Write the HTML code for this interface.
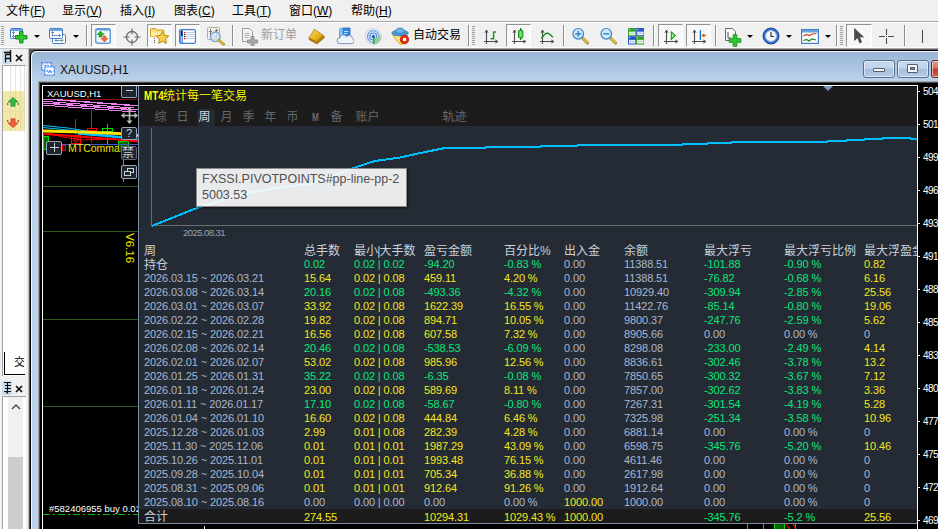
<!DOCTYPE html>
<html lang="zh"><head><meta charset="utf-8"><title>MT4</title>
<style>
*{box-sizing:border-box;margin:0;padding:0}
html,body{width:938px;height:529px;overflow:hidden;background:#f0f0f0;font-family:"Liberation Sans","Noto Sans CJK SC",sans-serif;font-size:12px;color:#000}
.abs,.abs>*{position:absolute}
#menu{left:0;top:0;width:938px;height:21px;background:#f0f0f0}
#menu span{position:absolute;top:3px;font-size:12px;line-height:17px;white-space:nowrap;color:#000}
#menu u{text-decoration:underline;text-underline-offset:1px}
#mline1{left:0;top:21px;width:938px;height:1px;background:#a6a6a6}
#mline2{left:0;top:22px;width:938px;height:1px;background:#fff}
#tb{left:0;top:23px;width:938px;height:26px;background:#f0f0f0;border-bottom:1px solid #c4c4c4;box-shadow:inset 0 -1px 0 #fff}
.sep{position:absolute;top:2px;width:1px;height:21px;background:#8c8c8c;box-shadow:1px 0 0 #fff}
.grip{position:absolute;top:3px;width:3px;height:20px;background:repeating-linear-gradient(#a0a0a0 0 1px,transparent 1px 2px)}
.pbtn{position:absolute;top:1px;height:23px;border:1px solid #939393;border-right-color:#fff;border-bottom-color:#fff;background:repeating-conic-gradient(#fff 0 25%,#f0f0f0 0 50%) 0 0/2px 2px}
.dd{position:absolute;top:12px;width:0;height:0;border-left:3px solid transparent;border-right:3px solid transparent;border-top:3px solid #000}
.tbt{position:absolute;top:5px;font-size:12px;line-height:14px;white-space:nowrap}
#tb svg{position:absolute}
#left>*{position:absolute}
#left{left:0;top:49px;width:28px;height:480px;background:#f0f0f0}
#mdi{left:28px;top:48px;width:910px;height:481px;background:#595959;border-left:1px solid #b9b9b9;border-top:1px solid #a8a8a8}
#win{left:30px;top:50px;width:920px;height:490px;border:1px solid #000;border-radius:6px 0 0 0;background:linear-gradient(#98b3d5 0,#a9c2df 14px,#bbd2ea 30px,#b9d1ea 100%);box-shadow:inset 1px 1px 0 rgba(255,255,255,.85)}
#wtitle{left:60px;top:63px;font-size:12px;line-height:14px;color:#111;white-space:nowrap}
.wb{position:absolute;top:60px;height:18px;border:1px solid #5a6f8f;border-radius:3px;background:linear-gradient(#c5d9ee 0,#c0d5ec 45%,#a5bedc 50%,#b4cbe6 100%);box-shadow:inset 0 0 0 1px rgba(255,255,255,.55)}
#chart{left:38px;top:81px;width:900px;height:448px;background:#000;border-left:1px solid #9da1a6;border-top:1px solid #a5a8ac;box-shadow:inset 1px 1px 0 #4c4c4c}
#cframe{left:42px;top:85px;width:876px;height:444px;border-left:1px solid #fff;border-top:1px solid #fff;border-right:1px solid #fff}
.ax{position:absolute;left:923px;font-size:10px;letter-spacing:-.5px;line-height:12px;color:#fff;white-space:nowrap;font-family:"Liberation Sans",sans-serif}
.tick{position:absolute;left:918px;width:2px;height:1px;background:#fff}
#panel{left:138px;top:86px;width:779px;height:438px;background:#252b34;border-left:1px solid #7d8fa8;border-bottom:1px solid #7d8a9c;overflow:hidden}
#phead{left:0;top:0;width:779px;height:40px;background:#1c1c1c}
#ptitle{left:5px;top:2.5px;font-size:12px;line-height:14px;color:#ffff00;white-space:nowrap;font-weight:350}
.tab{position:absolute;top:23px;font-size:12px;line-height:16px;color:#676a6e;white-space:nowrap}
#tabsel{left:58px;top:23px;width:18px;height:18px;background:#252b34;border-radius:3px}
#psum{left:0;top:423px;width:779px;height:14px;background:#1c1c1c}
.c{position:absolute;white-space:nowrap;line-height:14px}
.h{font-size:12px;color:#c9d1db;font-family:"Liberation Sans","Noto Sans CJK SC",sans-serif}
.d{font-size:11px;color:#a9b7cf;letter-spacing:-0.12px}
.v{font-size:11px;letter-spacing:-0.12px}
.y{color:#f3e71e}.g{color:#0ae779}.n{color:#a9b7cf}
.mb{position:absolute;width:16px;border:1px solid #98a8be;background:#1f242c;border-radius:2px;color:#c9d1db;text-align:center}
#tip{left:196px;top:168px;width:211px;height:39px;background:rgba(255,255,255,.9);border:1px solid #8c8c8c;box-shadow:1px 1px 2px rgba(0,0,0,.6);font-size:12.5px;color:#505050}
#tip div{position:absolute;left:5px;white-space:nowrap;line-height:15px}
</style></head><body>
<div class="abs">
<!-- MENU -->
<div id="menu">
<span style="left:6px">文件(<u>F</u>)</span>
<span style="left:62px">显示(<u>V</u>)</span>
<span style="left:120px">插入(<u>I</u>)</span>
<span style="left:174px">图表(<u>C</u>)</span>
<span style="left:232px">工具(<u>T</u>)</span>
<span style="left:289px">窗口(<u>W</u>)</span>
<span style="left:351px">帮助(<u>H</u>)</span>
</div>
<div id="mline1"></div><div id="mline2"></div>
<!-- TOOLBAR -->
<div id="tb">
<div class="grip" style="left:1px"></div>
<svg style="left:10px;top:5px" width="18" height="17" viewBox="0 0 18 17">
<rect x="0.5" y="0.5" width="12" height="10" rx="1" fill="#fdfdfd" stroke="#3d7fc9"/>
<rect x="1" y="1" width="11" height="2" fill="#6aa3e0"/>
<path d="M3.5 3.5v6M2 5l1.500-1.500L5 5M2 8l1.500 1.500L5 8" stroke="#6f8fb5" fill="none"/>
<path d="M9.500 3.500h3.500v4h4v3.500h-4v4h-3.500v-4h-4v-3.500h4z" fill="#2fc62f" stroke="#12921a" stroke-width="1"/>
</svg>
<div class="dd" style="left:34px"></div>
<svg style="left:49px;top:5px" width="18" height="17" viewBox="0 0 18 17">
<rect x="3.500" y="6.500" width="13" height="9" rx="1" fill="#fdfdfd" stroke="#3d7fc9"/>
<path d="M6 12.500h8M6 12.500l1.500-1.500M6 12.500l1.500 1.500M14 12.500l-1.500-1.500M14 12.500l-1.500 1.500" stroke="#6f8fb5" fill="none"/>
<rect x="0.500" y="0.500" width="13" height="10" rx="1" fill="#fdfdfd" stroke="#3d7fc9"/>
<rect x="1" y="1" width="12" height="2" fill="#6aa3e0"/>
<path d="M3.500 3.500v5M3.500 7.500h8M2 5l1.500-1.500L5 5M10 6l1.500 1.500L10 9" stroke="#6f8fb5" fill="none"/>
</svg>
<div class="dd" style="left:73px"></div>
<div class="sep" style="left:86px"></div>
<div class="pbtn" style="left:91px;width:25px"></div>
<svg style="left:95px;top:5px" width="16" height="16" viewBox="0 0 16 16">
<rect x="0.750" y="0.750" width="14.500" height="14.500" rx="2" fill="#fff" stroke="#5b9bd8" stroke-width="1.500"/>
<rect x="1" y="1" width="14" height="1.500" fill="#5b9bd8"/>
<path d="M9 3.500h4.500M9 5.500h4.500M2.500 11.500h4M2.500 13.500h4M2.500 9.500h3" stroke="#d5dbe3" stroke-dasharray="1.500 .8"/>
<path d="M5.500 3l3.500 3.500h-2v2.500h-3v-2.500h-2z" fill="#22b022" stroke="#148a14" stroke-width=".6"/>
<path d="M9.500 14l-3.500-3.500h2v-2.500h3v2.500h2z" fill="#f06a3a" stroke="#d04a18" stroke-width=".6"/>
</svg>
<svg style="left:122px;top:4px" width="20" height="20" viewBox="0 0 20 20">
<circle cx="10" cy="10" r="5.500" fill="none" stroke="#6a6a6a" stroke-width="1.300"/>
<path d="M10 1.500v6M10 12.500v6M1.500 10h6M12.500 10h6" stroke="#6a6a6a" stroke-width="1.100"/>
</svg>
<div class="pbtn" style="left:147px;width:25px"></div>
<svg style="left:150px;top:4px" width="20" height="18" viewBox="0 0 20 18">
<path d="M0.500 2.500q0-1 1-1h4l1.500 1.500h6q1 0 1 1v5.500h-13.500z" fill="#f7dc7a" stroke="#c9a227"/>
<path d="M1 5h13v4.500h-13z" fill="#fbeaa0"/>
<path d="M4.500 11v5" stroke="#555" stroke-dasharray="1 1"/>
<path d="M12.500 4.500l1.900 3.900 4.300.600-3.100 3 .7 4.300-3.800-2-3.800 2 .7-4.300-3.100-3 4.300-.600z" fill="#f6cf4a" stroke="#b8860b" stroke-width="1"/>
</svg>
<div class="pbtn" style="left:175px;width:25px"></div>
<svg style="left:179px;top:6px" width="17" height="15" viewBox="0 0 17 15">
<rect x="0.600" y="0.600" width="15.800" height="13.800" rx="1.500" fill="#fff" stroke="#3d7fd0" stroke-width="1.200"/>
<rect x="1.200" y="1.200" width="2.800" height="12.600" fill="#4a86d8"/>
<rect x="2" y="2" width="1.400" height="5" fill="#1a1a1a"/><rect x="2" y="7" width="1.400" height="6" fill="#9cc0f0"/>
<path d="M6.500 3.500h8.500M6.500 5.500h8.500M6.500 7.500h8.500M6.500 9.500h8.500" stroke="#a8c0ec" stroke-width=".8"/>
<rect x="5" y="2.900" width="1.300" height="1.300" fill="#e01818"/><rect x="5" y="4.900" width="1.300" height="1.300" fill="#333"/><rect x="5" y="6.900" width="1.300" height="1.300" fill="#333"/><rect x="5" y="8.900" width="1.300" height="1.300" fill="#e01818"/>
</svg>
<svg style="left:207px;top:4px" width="20" height="19" viewBox="0 0 20 19">
<rect x="0.500" y="0.500" width="12" height="12" rx="1" fill="#f1efe6" stroke="#b5ad98"/>
<path d="M3.500 2v8M9.500 2v8M2 4.500h3M8 3.500h3" stroke="#777"/>
<circle cx="8.300" cy="9.800" r="4.800" fill="#cfe3f7" fill-opacity=".85" stroke="#7aa4d4" stroke-width="1.300"/>
<path d="M12 13.300l4.500 4" stroke="#a8841c" stroke-width="2.800" stroke-linecap="round"/><path d="M12 13.200l4.300 3.800" stroke="#e6c544" stroke-width="1.400" stroke-linecap="round"/>
</svg>
<div class="sep" style="left:232px"></div>
<svg style="left:241px;top:5px" width="18" height="18" viewBox="0 0 18 18">
<path d="M1.500 0.500h7l3 3v10h-10z" fill="#f4f4f4" stroke="#9a9a9a"/>
<path d="M3.500 5.500h5M3.500 7.500h5M3.500 9.500h4" stroke="#aaa"/>
<path d="M10 8.500h3v3.500h3.500v3h-3.500v3.500h-3v-3.500h-3.500v-3h3.500z" fill="#a8a8a8" stroke="#8a8a8a" stroke-width=".8"/>
</svg>
<span class="tbt" style="left:261px;color:#9d9d9d">新订单</span>
<svg style="left:307px;top:6px" width="19" height="16" viewBox="0 0 19 16">
<defs><linearGradient id="gd" x1="0" y1="0" x2="1" y2="1"><stop offset="0" stop-color="#fbe27a"/><stop offset=".5" stop-color="#eab81e"/><stop offset="1" stop-color="#c48c0c"/></linearGradient></defs>
<path d="M2.100 8.800L9.300 12.700 16.500 6.400 17.500 8.600 10 15 2 10.600z" fill="#b47a0a" stroke="#8a5a06" stroke-width=".6"/>
<path d="M7.400 0.300L16.500 6.400 9.300 12.700 2.100 8.800z" fill="url(#gd)" stroke="#a87408" stroke-width=".7"/>
</svg>
<svg style="left:336px;top:4px" width="18" height="18" viewBox="0 0 18 18">
<path d="M3.500 2.200L6.500 1h7.500v10h-10.500z" fill="#2f86e6" stroke="#1c66c0" stroke-width=".7"/>
<path d="M3.500 2.200L6.500 1v10h-3z" fill="#8cc4f6"/>
<path d="M8 4.500h4.500M8 6.500h3" stroke="#bfe0fb" stroke-width="1"/>
<path d="M4 16.600a2.800 2.800 0 0 1-.3-5.600 3.600 3.600 0 0 1 6.800-1.200 3.300 3.300 0 0 1 6 1.800 2.600 2.600 0 0 1-.8 5z" fill="#eef4fb" stroke="#6f88b2" stroke-width=".9"/>
</svg>
<svg style="left:364px;top:5px" width="18" height="18" viewBox="0 0 18 18">
<circle cx="9.300" cy="8.500" r="8" fill="#eef2f6" stroke="#c3d3ea" stroke-width="1"/>
<circle cx="9.300" cy="8.500" r="5.800" fill="none" stroke="#6f9fe0" stroke-width="1.300"/>
<circle cx="9.300" cy="8.500" r="3.500" fill="none" stroke="#4a80d8" stroke-width="1.200"/>
<path d="M9.300 8.500L9.300 16.500A8 8 0 0 0 17.300 8.500z" fill="#8fd08f" fill-opacity=".75"/>
<path d="M9.800 9v7" stroke="#2fae2f" stroke-width="1.600"/>
<circle cx="9.300" cy="8.500" r="1.700" fill="#2a5fc8"/>
</svg>
<svg style="left:391px;top:4px" width="19" height="19" viewBox="0 0 19 19">
<path d="M1.500 8l7.500 9.300 3.500-.3 4-9z" fill="#f7d84a" stroke="#c9a21a" stroke-width=".8"/>
<path d="M3 8.500l6 7.500 1-7.500z" fill="#fbe98a"/>
<ellipse cx="9" cy="6" rx="8.200" ry="2.900" fill="#4a9bd6" stroke="#2d79b8" stroke-width=".8"/>
<path d="M4.500 5.500q.5-4.500 4.500-4.500t4.500 4.500q-4.500 2-9 0z" fill="#6db6e8" stroke="#2d79b8" stroke-width=".8"/>
<circle cx="13.500" cy="12.500" r="4.200" fill="#e42a12" stroke="#b81c08" stroke-width=".8"/>
<rect x="11.900" y="10.900" width="3.200" height="3.200" fill="#fff"/>
</svg>
<span class="tbt" style="left:413px;color:#000">自动交易</span>
<div class="sep" style="left:468px"></div>
<div class="grip" style="left:472px"></div>
<svg style="left:484px;top:6px" width="16" height="16" viewBox="0 0 16 16">
<path d="M2.500 1.500v13.500M0 12.500h13.500" stroke="#4e4e4e" fill="none" stroke-width="1.100"/><path d="M1 3.800L2.500 1 4 3.800M11.200 11L14 12.500 11.200 14" stroke="#4e4e4e" fill="none" stroke-width="1"/>
<path d="M9.600 2.600v7.700M9.600 3h2.200M9.600 9.800h-3" stroke="#1a8a1a" fill="none" stroke-width="1.400"/>
</svg>
<div class="pbtn" style="left:506px;width:25px"></div>
<svg style="left:512px;top:6px;overflow:visible" width="16" height="16" viewBox="0 0 16 16">
<path d="M2.500 1.500v13.500M0 12.500h13.500" stroke="#4e4e4e" fill="none" stroke-width="1.100"/><path d="M1 3.800L2.500 1 4 3.800M11.200 11L14 12.500 11.200 14" stroke="#4e4e4e" fill="none" stroke-width="1"/>
<path d="M8.700 -1v12" stroke="#157a15" stroke-width="1.300"/>
<rect x="6.500" y="1.300" width="4.400" height="7.500" rx=".8" fill="#3fd63f" stroke="#158015" stroke-width=".9"/>
<rect x="7.700" y="2.300" width="1.800" height="5.500" fill="#8af08a" fill-opacity=".7"/>
</svg>
<svg style="left:540px;top:6px" width="16" height="16" viewBox="0 0 16 16">
<path d="M2.500 1.500v13.500M0 12.500h13.500" stroke="#4e4e4e" fill="none" stroke-width="1.100"/><path d="M1 3.800L2.500 1 4 3.800M11.200 11L14 12.500 11.200 14" stroke="#4e4e4e" fill="none" stroke-width="1"/>
<path d="M1.400 9.500Q5 4.200 7.300 4.300T12.900 8.400" stroke="#1a8a1a" fill="none" stroke-width="1.400"/>
</svg>
<div class="sep" style="left:563px"></div>
<svg style="left:572px;top:4px" width="18" height="18" viewBox="0 0 18 18">
<path d="M10.500 11l5 5" stroke="#a8841c" stroke-width="3" stroke-linecap="round"/>
<path d="M10.500 10.800l4.800 4.800" stroke="#e6c544" stroke-width="1.600" stroke-linecap="round"/>
<circle cx="6.300" cy="6.800" r="5.300" fill="#cfe8fa" stroke="#3a80c8" stroke-width="1.200"/>
<path d="M3.300 6.800h6M6.300 3.800v6" stroke="#4a90cc" stroke-width="1.700"/>
</svg>
<svg style="left:600px;top:4px" width="18" height="18" viewBox="0 0 18 18">
<path d="M10.500 11l5 5" stroke="#a8841c" stroke-width="3" stroke-linecap="round"/>
<path d="M10.500 10.800l4.800 4.800" stroke="#e6c544" stroke-width="1.600" stroke-linecap="round"/>
<circle cx="6.300" cy="6.800" r="5.300" fill="#cfe8fa" stroke="#3a80c8" stroke-width="1.200"/>
<path d="M3.300 6.800h6" stroke="#4a90cc" stroke-width="1.700"/>
</svg>
<svg style="left:627.500px;top:5px" width="16.500" height="16.500" viewBox="0 0 16 16">
<rect x="0" y="0" width="8" height="8" fill="#36a02a"/><rect x="8" y="0" width="8" height="8" fill="#2458c8"/>
<rect x="0" y="8" width="8" height="8" fill="#2458c8"/><rect x="8" y="8" width="8" height="8" fill="#36a02a"/>
<rect x="1" y="3.500" width="6" height="3.500" fill="#eef8ee"/><rect x="9" y="3.500" width="6" height="3.500" fill="#eef2fc"/>
<rect x="1" y="11.500" width="6" height="3.500" fill="#eef2fc"/><rect x="9" y="11.500" width="6" height="3.500" fill="#eef8ee"/>
<path d="M2 5h4M10 13h4" stroke="#8fd08f" stroke-width=".8"/><path d="M10 5h4M2 13h4" stroke="#8fb0f0" stroke-width=".8"/>
<rect x="1" y="1" width="1" height="1" fill="#cfeccf"/><rect x="9" y="1" width="1" height="1" fill="#cfdcf8"/><rect x="1" y="9" width="1" height="1" fill="#cfdcf8"/><rect x="9" y="9" width="1" height="1" fill="#cfeccf"/>
</svg>
<div class="sep" style="left:653px"></div>
<div class="pbtn" style="left:658px;width:25px"></div>
<svg style="left:664px;top:6px" width="16" height="16" viewBox="0 0 16 16">
<path d="M2.500 1.500v13.500M0 12.500h13.500" stroke="#4e4e4e" fill="none" stroke-width="1.100"/><path d="M1 3.800L2.500 1 4 3.800M11.200 11L14 12.500 11.200 14" stroke="#4e4e4e" fill="none" stroke-width="1"/>
<path d="M7.300 3l4 3.500-4 4z" fill="#b8f0b8" stroke="#1a9a1a" stroke-width="1.100"/>
</svg>
<div class="pbtn" style="left:686px;width:25px"></div>
<svg style="left:692px;top:6px" width="16" height="16" viewBox="0 0 16 16">
<path d="M2.500 1.500v13.500M0 12.500h13.500" stroke="#4e4e4e" fill="none" stroke-width="1.100"/><path d="M1 3.800L2.500 1 4 3.800M11.200 11L14 12.500 11.200 14" stroke="#4e4e4e" fill="none" stroke-width="1"/>
<path d="M8.400 1.200v9.600" stroke="#1a6ab0" stroke-width="1.300"/>
<path d="M14 6.500h-4" stroke="#e05a10" stroke-width="1.200"/><path d="M9.500 6.500l2.800-2.300v4.600z" fill="#e05a10"/>
</svg>
<div class="sep" style="left:715px"></div>
<svg style="left:725px;top:5px;overflow:visible" width="18" height="18" viewBox="0 0 18 18">
<path d="M0.500 0.500h7l3 3v9h-10z" fill="#f6f6f6" stroke="#6a6a6a"/>
<path d="M3 4v6h3" stroke="#555" fill="none"/>
<path d="M8.200 6.700h3.600v4h4v3.600h-4v4h-3.600v-4h-4v-3.600h4z" fill="#2fc62f" stroke="#12921a" stroke-width=".9"/>
</svg>
<div class="dd" style="left:747px"></div>
<svg style="left:762px;top:4px" width="18" height="18" viewBox="0 0 18 18">
<circle cx="9" cy="9" r="8" fill="#2f6fc8" stroke="#1a4a94"/>
<circle cx="9" cy="9" r="5.500" fill="#f4f8fc" stroke="#9ab8e0"/>
<path d="M9 5v4.500h3" stroke="#333" fill="none" stroke-width="1.200"/>
</svg>
<div class="dd" style="left:786px"></div>
<svg style="left:801px;top:6px" width="18" height="15" viewBox="0 0 18 15">
<rect x="0.600" y="0.600" width="16.800" height="13.800" fill="#fdfdfd" stroke="#3d7fc9" stroke-width="1.200"/>
<rect x="1" y="1" width="16" height="2.500" fill="#6aa3e0"/>
<path d="M2.500 7l3-1.500 3 1 3-1.500 4-0.500" stroke="#d23a1a" fill="none" stroke-width="1.200"/>
<path d="M2.500 11.500l3-1 2.500 1.500 3-2 4 1" stroke="#1a8a1a" fill="none" stroke-width="1.200"/>
</svg>
<div class="dd" style="left:825px"></div>
<div class="sep" style="left:836px"></div>
<div class="grip" style="left:840px"></div>
<div class="pbtn" style="left:846px;width:26px"></div>
<svg style="left:854px;top:5px" width="11" height="16" viewBox="0 0 11 16">
<path d="M0.500 0.500v12l3-2.800 2.200 5.300 2-.9-2.200-5.100h4z" fill="#4a4a4a" stroke="#3c3c3c" stroke-width=".6"/>
</svg>
<svg style="left:879px;top:6px" width="15" height="15" viewBox="0 0 15 15">
<path d="M7.500 0v6M7.500 9v6M0 7.500h6M9 7.500h6" stroke="#4a4a4a" stroke-width="1.100"/><rect x="7" y="7" width="1" height="1" fill="#4a4a4a"/>
</svg>
<div class="sep" style="left:904px"></div>
<div style="position:absolute;left:922px;top:7px;width:1px;height:13px;background:#444"></div>
</div>
<!-- LEFT PANEL -->
<div id="left">
<div style="left:2px;top:1px;width:10px;height:14px;background:#cfdcec"></div>
<svg style="left:3px;top:1px" width="9" height="13" viewBox="0 0 9 13"><path d="M1 2.500h6.500M7.500 0v12M2.500 4.500h5M2.500 4.500v8M2.500 8.500h5" stroke="#111" fill="none" stroke-width="1.300"/></svg>
<svg style="left:15px;top:5px" width="8" height="8" viewBox="0 0 8 8"><path d="M1 1l6 6M7 1l-6 6" stroke="#111" stroke-width="1.700"/></svg>
<div style="left:2px;top:16px;width:24px;height:311px;background:#fff;border-top:1px solid #a0a0a0;border-left:1px solid #a0a0a0"></div>
<div style="left:24px;top:17px;width:1px;height:310px;background:#f4f4f4"></div>
<div style="left:3px;top:42px;width:22px;height:40px;background:#f3e7a2"></div>
<div style="left:10px;top:17px;width:1px;height:65px;background:rgba(200,200,200,.45)"></div>
<div style="left:15px;top:17px;width:1px;height:65px;background:rgba(200,200,200,.45)"></div>
<div style="left:20px;top:17px;width:1px;height:65px;background:rgba(200,200,200,.45)"></div>
<div style="left:24px;top:17px;width:1px;height:65px;background:rgba(200,200,200,.45)"></div>
<div style="left:3px;top:62px;width:22px;height:1px;background:#e6dcae"></div>
<svg style="left:7px;top:48px" width="12" height="10" viewBox="0 0 12 12" preserveAspectRatio="none"><path d="M6 0.500l5 5.500h-3v5h-4v-5h-3z" fill="#35b84a" stroke="#1d8a2e" stroke-width=".8"/><path d="M0 7l2 1.500-2 1.500zM12 7l-2 1.500 2 1.500z" fill="#1d8a2e"/></svg>
<svg style="left:7px;top:69px" width="12" height="10" viewBox="0 0 12 12" preserveAspectRatio="none"><path d="M6 11.500l5-5.500h-3v-5h-4v5h-3z" fill="#f0643a" stroke="#c23c14" stroke-width=".8"/><path d="M0 2l2 1.500-2 1.500zM12 2l-2 1.500 2 1.500z" fill="#c23c14"/></svg>
<div style="left:4px;top:303px;width:21px;height:23px;border-left:1px solid #000;border-bottom:1px solid #000"></div>
<div style="left:14px;top:307px;font-size:11px;line-height:13px;color:#000;overflow:hidden;width:10px;white-space:nowrap">交</div>
<div style="left:0;top:327px;width:29px;height:4px;background:#f0f0f0"></div>
<div style="left:2px;top:332px;width:10px;height:14px;background:#cfdcec"></div>
<svg style="left:3px;top:332px" width="9" height="13" viewBox="0 0 9 13"><path d="M1 1.500h7M2 4.500h6M2 7.500h6M1 10.500h7M4.500 1.500v9M5 12.500l-2-2" stroke="#111" fill="none" stroke-width="1.200"/></svg>
<svg style="left:15px;top:336px" width="8" height="8" viewBox="0 0 8 8"><path d="M1 1l6 6M7 1l-6 6" stroke="#111" stroke-width="1.700"/></svg>
<div style="left:2px;top:347px;width:24px;height:133px;background:#fff;border-top:1px solid #a0a0a0;border-left:1px solid #a0a0a0"></div>
<div style="left:8px;top:348px;width:15px;height:132px;background:#f0f0f0"></div>
<svg style="left:11px;top:355px" width="10" height="6" viewBox="0 0 10 6"><path d="M1 5l4-4 4 4" stroke="#505050" fill="none" stroke-width="1.500"/></svg>
<div style="left:8px;top:408px;width:15px;height:72px;background:#cdcdcd"></div>
</div>
<!-- MDI -->
<div id="mdi"></div>
<div id="win"></div>
<svg style="left:41px;top:62px" width="14" height="14" viewBox="0 0 14 14"><rect x="0.700" y="0.700" width="9.600" height="7.600" fill="#fff" stroke="#3f86ee" stroke-width="1.400" stroke-dasharray="1.200 .500"/><path d="M2.500 4l1.300-1.300 1.400 1.800 1.400-1.800 1.300 1.300" stroke="#3f86ee" fill="none" stroke-width=".9"/><rect x="3.700" y="4.900" width="9.600" height="8.200" fill="#fff" stroke="#3f86ee" stroke-width="1.400" stroke-dasharray="1.200 .500"/><path d="M5.500 10l1-2 1.200 3 1.200-3 1.200 3 1-2" stroke="#3f86ee" fill="none" stroke-width=".9"/></svg>
<div id="wtitle">XAUUSD,H1</div>
<div class="wb" style="left:863px;width:32px"><i style="position:absolute;left:9px;top:7px;width:12px;height:4px;background:#f4f6f8;border:1px solid #55606e;border-radius:1px"></i></div>
<div class="wb" style="left:897px;width:32px"><i style="position:absolute;left:9px;top:3px;width:11px;height:9px;background:#f4f6f8;border:1px solid #55606e;border-radius:1px"></i><i style="position:absolute;left:12px;top:6px;width:5px;height:3px;background:#7f95b4;border:1px solid #55606e"></i></div>
<div class="wb" style="left:931px;width:32px;background:linear-gradient(#e0a090 0,#d0705c 45%,#c03c28 50%,#d0604c 100%);border-color:#5a2a2a"></div>
<div id="chart"></div>
<div id="cframe"></div>
<svg style="left:43px;top:86px" width="95" height="443" viewBox="0 0 95 443" shape-rendering="crispEdges">
<rect x="0" y="100" width="95" height="1" fill="#2c5a1c"/>
<rect x="0" y="145" width="95" height="1" fill="#2c5a1c"/>
<rect x="0" y="233" width="95" height="1" fill="#2c5a1c"/>
<rect x="0" y="320" width="95" height="1" fill="#2c5a1c"/>
<rect x="0" y="13" width="95" height="1" fill="#8a1414"/>
<rect x="0" y="13" width="19.5714" height="1" fill="#ee82ee"/>
<rect x="13.5714" y="14" width="19.5714" height="1" fill="#ee82ee"/>
<rect x="27.1429" y="15" width="19.5714" height="1" fill="#ee82ee"/>
<rect x="40.7143" y="16" width="19.5714" height="1" fill="#ee82ee"/>
<rect x="54.2857" y="17" width="19.5714" height="1" fill="#ee82ee"/>
<rect x="67.8571" y="18" width="19.5714" height="1" fill="#ee82ee"/>
<rect x="81.4286" y="19" width="13.5714" height="1" fill="#ee82ee"/>
<rect x="0" y="15" width="9.57143" height="1" fill="#ee82ee"/>
<rect x="9.57143" y="16" width="13.5714" height="1" fill="#ee82ee"/>
<rect x="23.1429" y="17" width="13.5714" height="1" fill="#ee82ee"/>
<rect x="36.7143" y="18" width="13.5714" height="1" fill="#ee82ee"/>
<rect x="50.2857" y="19" width="13.5714" height="1" fill="#ee82ee"/>
<rect x="63.8571" y="20" width="13.5714" height="1" fill="#ee82ee"/>
<rect x="77.4286" y="21" width="13.5714" height="1" fill="#ee82ee"/>
<rect x="0" y="17" width="16.5714" height="1" fill="#ee82ee"/>
<rect x="10.5714" y="18" width="19.5714" height="1" fill="#ee82ee"/>
<rect x="24.1429" y="19" width="19.5714" height="1" fill="#ee82ee"/>
<rect x="37.7143" y="20" width="19.5714" height="1" fill="#ee82ee"/>
<rect x="51.2857" y="21" width="19.5714" height="1" fill="#ee82ee"/>
<rect x="64.8571" y="22" width="19.5714" height="1" fill="#ee82ee"/>
<rect x="78.4286" y="23" width="16.5714" height="1" fill="#ee82ee"/>
<rect x="0" y="19" width="11.5714" height="1" fill="#ee82ee"/>
<rect x="11.5714" y="20" width="13.5714" height="1" fill="#ee82ee"/>
<rect x="25.1429" y="21" width="13.5714" height="1" fill="#ee82ee"/>
<rect x="38.7143" y="22" width="13.5714" height="1" fill="#ee82ee"/>
<rect x="52.2857" y="23" width="13.5714" height="1" fill="#ee82ee"/>
<rect x="65.8571" y="24" width="13.5714" height="1" fill="#ee82ee"/>
<rect x="79.4286" y="25" width="13.5714" height="1" fill="#ee82ee"/>
<rect x="0" y="50" width="5" height="14" fill="#006a00"/>
<rect x="0" y="47" width="1" height="27" fill="#00e000"/>
<rect x="0" y="50" width="6" height="1" fill="#00e000"/>
<rect x="0" y="63" width="6" height="1" fill="#00e000"/>
<rect x="5" y="50" width="1" height="14" fill="#00e000"/>
<rect x="32" y="33" width="1" height="27" fill="#ff0000"/>
<rect x="48" y="24" width="1" height="33" fill="#ff0000"/>
<rect x="64" y="38" width="1" height="21" fill="#00e000"/>
<rect x="80" y="55" width="1" height="41" fill="#00e000"/>
<rect x="44.5" y="42.5" width="9" height="2" fill="none" stroke="#ff0000"/>
<rect x="43" y="51" width="14" height="1" fill="#ff0000"/>
<rect x="59.5" y="42.5" width="10" height="3" fill="none" stroke="#00e000"/>
<rect x="28.5" y="49.5" width="9" height="8" fill="none" stroke="#ff0000"/>
<rect x="30" y="51" width="6" height="5" fill="#8b0000"/>
<rect x="75" y="55" width="10" height="5" fill="#006a00"/>
<rect x="75" y="55" width="11" height="1" fill="#00e000"/>
<rect x="75" y="55" width="1" height="6" fill="#00e000"/>
<rect x="85" y="55" width="1" height="6" fill="#00e000"/>
<g shape-rendering="auto">
<path d="M0 39.5 L25 42 L55 47" stroke="#00bfff" stroke-width="1" fill="none"/>
<path d="M0 41.5 L25 44 L55 48" stroke="#00bfff" stroke-width="1" fill="none"/>
<path d="M35 47.5 L60 49.5 L85 52 L95 54" stroke="#00bfff" stroke-width="2.500" fill="none"/>
<path d="M0 45 L40 46 L75 47.5 L95 49.5" stroke="#ffe600" stroke-width="3" fill="none"/>
<path d="M0 48 L30 50 L60 52.5 L95 55" stroke="#ff0000" stroke-width="2" fill="none"/>
<path d="M5 47 L20 51 L40 54 L70 53 L95 56" stroke="#ff0000" stroke-width="1" fill="none"/>
</g>
<rect x="19" y="58" width="76" height="1" fill="#3c5ac8"/>
<rect x="19.5" y="59.5" width="3" height="5" fill="none" stroke="#ff0000"/>
<rect x="0" y="428" width="7" height="1" fill="#00c000"/>
<rect x="10" y="428" width="2" height="1" fill="#00c000"/>
<rect x="15" y="428" width="7" height="1" fill="#00c000"/>
<rect x="25" y="428" width="2" height="1" fill="#00c000"/>
<rect x="30" y="428" width="7" height="1" fill="#00c000"/>
<rect x="40" y="428" width="2" height="1" fill="#00c000"/>
<rect x="45" y="428" width="7" height="1" fill="#00c000"/>
<rect x="55" y="428" width="2" height="1" fill="#00c000"/>
<rect x="60" y="428" width="7" height="1" fill="#00c000"/>
<rect x="70" y="428" width="2" height="1" fill="#00c000"/>
<rect x="75" y="428" width="7" height="1" fill="#00c000"/>
<rect x="85" y="428" width="2" height="1" fill="#00c000"/>
<rect x="90" y="428" width="5" height="1" fill="#00c000"/>
<rect x="100" y="428" width="-5" height="1" fill="#00c000"/>
</svg>
<div style="left:47px;top:87.500px;font-size:9.500px;line-height:12px;color:#fff;white-space:nowrap">XAUUSD,H1</div>
<div style="left:68px;top:141px;font-size:10.500px;line-height:14px;color:#f0e000;white-space:nowrap;width:54px;overflow:hidden">MTCommander</div>
<div style="left:49px;top:503px;font-size:9.500px;line-height:12px;color:#fff;white-space:nowrap;width:89px;overflow:hidden">#582406955 buy 0.02</div>
<div style="left:124px;top:233px;width:40px;height:12px;font-size:11.500px;line-height:12px;color:#f0e000;white-space:nowrap;transform:rotate(90deg);transform-origin:0 0;margin-left:12px">V6.16</div>
<div class="mb" style="left:121px;top:86px;height:12px;border-top:none;border-radius:0 0 2px 2px"><i style="position:absolute;left:4px;top:4px;width:7px;height:1px;background:#c9d1db"></i></div>
<svg style="left:121px;top:107px" width="17" height="17" viewBox="0 0 17 17"><path d="M8.500 1v15M1 8.500h15" stroke="#b8b8b8" stroke-width="1.600"/><path d="M8.500 0l3 3.500h-6zM8.500 17l3-3.500h-6zM0 8.500l3.500-3v6zM17 8.500l-3.500-3v6z" fill="#b8b8b8"/></svg>
<div class="mb" style="left:121px;top:127px;height:13px;font-size:11px;line-height:11px">?</div>
<div class="mb" style="left:46px;top:141px;height:14px"><i style="position:absolute;left:3px;top:5px;width:9px;height:1px;background:#c9d1db"></i><i style="position:absolute;left:7px;top:1px;width:1px;height:9px;background:#c9d1db"></i></div>
<div class="mb" style="left:121px;top:146px;height:14px;font-size:12px;line-height:12px;overflow:hidden;border-color:#5d6670"><span style="position:relative;left:-1px">禁</span></div>
<div class="mb" style="left:121px;top:165px;height:14px"><i style="position:absolute;left:5px;top:2px;width:7px;height:5px;border:1px solid #c9d1db"></i><i style="position:absolute;left:2px;top:5px;width:7px;height:5px;border:1px solid #c9d1db;background:#1f242c"></i></div>
<!-- price axis -->
<div class="tick" style="top:91px"></div>
<div class="ax" style="top:86px">5040.00</div>
<div class="tick" style="top:124px"></div>
<div class="ax" style="top:119px">5010.00</div>
<div class="tick" style="top:157px"></div>
<div class="ax" style="top:152px">4990.00</div>
<div class="tick" style="top:190px"></div>
<div class="ax" style="top:185px">4960.00</div>
<div class="tick" style="top:223px"></div>
<div class="ax" style="top:218px">4930.00</div>
<div class="tick" style="top:256px"></div>
<div class="ax" style="top:251px">4910.00</div>
<div class="tick" style="top:289px"></div>
<div class="ax" style="top:284px">4880.00</div>
<div class="tick" style="top:322px"></div>
<div class="ax" style="top:317px">4850.00</div>
<div class="tick" style="top:355px"></div>
<div class="ax" style="top:350px">4830.00</div>
<div class="tick" style="top:388px"></div>
<div class="ax" style="top:383px">4800.00</div>
<div class="tick" style="top:421px"></div>
<div class="ax" style="top:416px">4770.00</div>
<div class="tick" style="top:454px"></div>
<div class="ax" style="top:449px">4750.00</div>
<div class="tick" style="top:487px"></div>
<div class="ax" style="top:482px">4720.00</div>
<div class="tick" style="top:520px"></div>
<div class="ax" style="top:515px">4690.00</div>
<!-- bottom candles -->
<div style="left:747px;top:524px;width:1px;height:5px;background:#00e000"></div>
<div style="left:763px;top:524px;width:1px;height:5px;background:#00e000"></div>
<div style="left:775px;top:524px;width:10px;height:5px;background:#006400"></div>
<div style="left:774px;top:524px;width:1px;height:5px;background:#00e000"></div>
<div style="left:784px;top:524px;width:1px;height:5px;background:#00e000"></div>
<div style="left:795px;top:524px;width:1px;height:5px;background:#00e000"></div>
<svg style="left:785px;top:524px" width="12" height="5" viewBox="0 0 12 5"><path d="M1 0l3.500 5M8 0l2.500 4" stroke="#ff0000" stroke-width="1.200" fill="none"/></svg>
<div style="left:204px;top:526px;width:1px;height:3px;background:#ffffff"></div>
<!-- STATS PANEL -->
<div id="panel" class="abs">
<div id="phead"></div><div style="left:0;top:0;width:779px;height:1px;background:#050505"></div>
<div id="ptitle"><b style="font-family:'Liberation Sans',sans-serif;display:inline-block;transform:scaleX(.82);transform-origin:0 50%;margin-right:-5px">MT4</b>统计每一笔交易</div>
<div id="tabsel"></div>
<span class="tab" style="left:15.5px">综</span>
<span class="tab" style="left:37.5px">日</span>
<span class="tab" style="left:59.5px;color:#d3dae2">周</span>
<span class="tab" style="left:81.5px">月</span>
<span class="tab" style="left:103.5px">季</span>
<span class="tab" style="left:125.5px">年</span>
<span class="tab" style="left:147.5px">币</span>
<span class="tab" style="left:172.5px;font-size:11px;font-weight:bold;transform:scaleX(.75);transform-origin:0 50%">M</span>
<span class="tab" style="left:191.5px">备</span>
<span class="tab" style="left:216.5px">账户</span>
<span class="tab" style="left:303.5px">轨迹</span>
<div style="left:684px;top:0;width:0;height:0;border-left:5px solid transparent;border-right:5px solid transparent;border-top:5px solid #7b95b3"></div>
<svg style="left:0;top:0" width="779" height="160" viewBox="0 0 779 160"><path d="M12.500 42v97.500H779" stroke="#6b6d70" fill="none" stroke-width="1" shape-rendering="crispEdges"/><polyline points="12.5,140.0 58.0,122.0 107.5,107.0 141.0,101.5 173.0,97.3 194.0,89.5 215.0,81.8 236.0,75.0 261.0,71.5 286.0,66.0 306.0,62.0 346.0,62.0 347.0,61.0 401.0,61.0 402.0,60.0 438.0,60.0 439.0,59.0 543.0,59.0 544.0,58.0 568.0,58.0 569.0,57.0 592.0,57.0 593.0,56.0 688.0,56.0 689.0,55.0 707.0,55.0 708.0,54.0 725.0,54.0 726.0,53.0 743.0,53.0 744.0,52.0 771.0,52.0 772.0,53.0 779.0,53.0" fill="none" stroke="#00bfff" stroke-width="2" shape-rendering="crispEdges"/></svg>
<div class="c" style="left:44px;top:141px;font-size:9.5px;color:#98a1ae;line-height:12px;letter-spacing:-0.55px">2025.08.31</div>
<div id="psum"></div>
<div class="c h" style="left:5px;top:158px">周</div>
<div class="c h" style="left:165px;top:158px">总手数</div>
<div class="c h" style="left:215px;top:158px">最小<span style="margin:0 -.8px">|</span>大手数</div>
<div class="c h" style="left:285px;top:158px">盈亏金额</div>
<div class="c h" style="left:365px;top:158px">百分比%</div>
<div class="c h" style="left:425px;top:158px">出入金</div>
<div class="c h" style="left:485px;top:158px">余额</div>
<div class="c h" style="left:565px;top:158px">最大浮亏</div>
<div class="c h" style="left:645px;top:158px">最大浮亏比例</div>
<div class="c h" style="left:725px;top:158px">最大浮盈金</div>
<div class="c h" style="left:5px;top:172px">持仓</div>
<div class="c v g" style="left:165px;top:171px">0.02</div>
<div class="c v g" style="left:215px;top:171px">0.02 | 0.02</div>
<div class="c v g" style="left:285px;top:171px">-94.20</div>
<div class="c v g" style="left:365px;top:171px">-0.83 %</div>
<div class="c v n" style="left:425px;top:171px">0.00</div>
<div class="c v n" style="left:485px;top:171px">11388.51</div>
<div class="c v g" style="left:565px;top:171px">-101.88</div>
<div class="c v g" style="left:645px;top:171px">-0.90 %</div>
<div class="c v y" style="left:725px;top:171px">0.82</div>
<div class="c d" style="left:5px;top:185px">2026.03.15 ~ 2026.03.21</div>
<div class="c v y" style="left:165px;top:185px">15.64</div>
<div class="c v y" style="left:215px;top:185px">0.02 | 0.08</div>
<div class="c v y" style="left:285px;top:185px">459.11</div>
<div class="c v y" style="left:365px;top:185px">4.20 %</div>
<div class="c v n" style="left:425px;top:185px">0.00</div>
<div class="c v n" style="left:485px;top:185px">11388.51</div>
<div class="c v g" style="left:565px;top:185px">-76.82</div>
<div class="c v g" style="left:645px;top:185px">-0.68 %</div>
<div class="c v y" style="left:725px;top:185px">6.16</div>
<div class="c d" style="left:5px;top:199px">2026.03.08 ~ 2026.03.14</div>
<div class="c v g" style="left:165px;top:199px">20.16</div>
<div class="c v g" style="left:215px;top:199px">0.02 | 0.08</div>
<div class="c v g" style="left:285px;top:199px">-493.36</div>
<div class="c v g" style="left:365px;top:199px">-4.32 %</div>
<div class="c v n" style="left:425px;top:199px">0.00</div>
<div class="c v n" style="left:485px;top:199px">10929.40</div>
<div class="c v g" style="left:565px;top:199px">-309.94</div>
<div class="c v g" style="left:645px;top:199px">-2.85 %</div>
<div class="c v y" style="left:725px;top:199px">25.56</div>
<div class="c d" style="left:5px;top:213px">2026.03.01 ~ 2026.03.07</div>
<div class="c v y" style="left:165px;top:213px">33.92</div>
<div class="c v y" style="left:215px;top:213px">0.02 | 0.08</div>
<div class="c v y" style="left:285px;top:213px">1622.39</div>
<div class="c v y" style="left:365px;top:213px">16.55 %</div>
<div class="c v n" style="left:425px;top:213px">0.00</div>
<div class="c v n" style="left:485px;top:213px">11422.76</div>
<div class="c v g" style="left:565px;top:213px">-85.14</div>
<div class="c v g" style="left:645px;top:213px">-0.80 %</div>
<div class="c v y" style="left:725px;top:213px">19.06</div>
<div class="c d" style="left:5px;top:227px">2026.02.22 ~ 2026.02.28</div>
<div class="c v y" style="left:165px;top:227px">19.82</div>
<div class="c v y" style="left:215px;top:227px">0.02 | 0.08</div>
<div class="c v y" style="left:285px;top:227px">894.71</div>
<div class="c v y" style="left:365px;top:227px">10.05 %</div>
<div class="c v n" style="left:425px;top:227px">0.00</div>
<div class="c v n" style="left:485px;top:227px">9800.37</div>
<div class="c v g" style="left:565px;top:227px">-247.76</div>
<div class="c v g" style="left:645px;top:227px">-2.59 %</div>
<div class="c v y" style="left:725px;top:227px">5.62</div>
<div class="c d" style="left:5px;top:241px">2026.02.15 ~ 2026.02.21</div>
<div class="c v y" style="left:165px;top:241px">16.56</div>
<div class="c v y" style="left:215px;top:241px">0.02 | 0.08</div>
<div class="c v y" style="left:285px;top:241px">607.58</div>
<div class="c v y" style="left:365px;top:241px">7.32 %</div>
<div class="c v n" style="left:425px;top:241px">0.00</div>
<div class="c v n" style="left:485px;top:241px">8905.66</div>
<div class="c v n" style="left:565px;top:241px">0.00</div>
<div class="c v n" style="left:645px;top:241px">0.00 %</div>
<div class="c v n" style="left:725px;top:241px">0</div>
<div class="c d" style="left:5px;top:255px">2026.02.08 ~ 2026.02.14</div>
<div class="c v g" style="left:165px;top:255px">20.46</div>
<div class="c v g" style="left:215px;top:255px">0.02 | 0.08</div>
<div class="c v g" style="left:285px;top:255px">-538.53</div>
<div class="c v g" style="left:365px;top:255px">-6.09 %</div>
<div class="c v n" style="left:425px;top:255px">0.00</div>
<div class="c v n" style="left:485px;top:255px">8298.08</div>
<div class="c v g" style="left:565px;top:255px">-233.00</div>
<div class="c v g" style="left:645px;top:255px">-2.49 %</div>
<div class="c v y" style="left:725px;top:255px">4.14</div>
<div class="c d" style="left:5px;top:269px">2026.02.01 ~ 2026.02.07</div>
<div class="c v y" style="left:165px;top:269px">53.02</div>
<div class="c v y" style="left:215px;top:269px">0.02 | 0.08</div>
<div class="c v y" style="left:285px;top:269px">985.96</div>
<div class="c v y" style="left:365px;top:269px">12.56 %</div>
<div class="c v n" style="left:425px;top:269px">0.00</div>
<div class="c v n" style="left:485px;top:269px">8836.61</div>
<div class="c v g" style="left:565px;top:269px">-302.46</div>
<div class="c v g" style="left:645px;top:269px">-3.78 %</div>
<div class="c v y" style="left:725px;top:269px">13.2</div>
<div class="c d" style="left:5px;top:283px">2026.01.25 ~ 2026.01.31</div>
<div class="c v g" style="left:165px;top:283px">35.22</div>
<div class="c v g" style="left:215px;top:283px">0.02 | 0.08</div>
<div class="c v g" style="left:285px;top:283px">-6.35</div>
<div class="c v g" style="left:365px;top:283px">-0.08 %</div>
<div class="c v n" style="left:425px;top:283px">0.00</div>
<div class="c v n" style="left:485px;top:283px">7850.65</div>
<div class="c v g" style="left:565px;top:283px">-300.32</div>
<div class="c v g" style="left:645px;top:283px">-3.67 %</div>
<div class="c v y" style="left:725px;top:283px">7.12</div>
<div class="c d" style="left:5px;top:297px">2026.01.18 ~ 2026.01.24</div>
<div class="c v y" style="left:165px;top:297px">23.00</div>
<div class="c v y" style="left:215px;top:297px">0.02 | 0.08</div>
<div class="c v y" style="left:285px;top:297px">589.69</div>
<div class="c v y" style="left:365px;top:297px">8.11 %</div>
<div class="c v n" style="left:425px;top:297px">0.00</div>
<div class="c v n" style="left:485px;top:297px">7857.00</div>
<div class="c v g" style="left:565px;top:297px">-302.62</div>
<div class="c v g" style="left:645px;top:297px">-3.83 %</div>
<div class="c v y" style="left:725px;top:297px">3.36</div>
<div class="c d" style="left:5px;top:311px">2026.01.11 ~ 2026.01.17</div>
<div class="c v g" style="left:165px;top:311px">17.10</div>
<div class="c v g" style="left:215px;top:311px">0.02 | 0.08</div>
<div class="c v g" style="left:285px;top:311px">-58.67</div>
<div class="c v g" style="left:365px;top:311px">-0.80 %</div>
<div class="c v n" style="left:425px;top:311px">0.00</div>
<div class="c v n" style="left:485px;top:311px">7267.31</div>
<div class="c v g" style="left:565px;top:311px">-301.54</div>
<div class="c v g" style="left:645px;top:311px">-4.19 %</div>
<div class="c v y" style="left:725px;top:311px">5.28</div>
<div class="c d" style="left:5px;top:325px">2026.01.04 ~ 2026.01.10</div>
<div class="c v y" style="left:165px;top:325px">16.60</div>
<div class="c v y" style="left:215px;top:325px">0.02 | 0.08</div>
<div class="c v y" style="left:285px;top:325px">444.84</div>
<div class="c v y" style="left:365px;top:325px">6.46 %</div>
<div class="c v n" style="left:425px;top:325px">0.00</div>
<div class="c v n" style="left:485px;top:325px">7325.98</div>
<div class="c v g" style="left:565px;top:325px">-251.34</div>
<div class="c v g" style="left:645px;top:325px">-3.58 %</div>
<div class="c v y" style="left:725px;top:325px">10.96</div>
<div class="c d" style="left:5px;top:339px">2025.12.28 ~ 2026.01.03</div>
<div class="c v y" style="left:165px;top:339px">2.99</div>
<div class="c v y" style="left:215px;top:339px">0.01 | 0.08</div>
<div class="c v y" style="left:285px;top:339px">282.39</div>
<div class="c v y" style="left:365px;top:339px">4.28 %</div>
<div class="c v n" style="left:425px;top:339px">0.00</div>
<div class="c v n" style="left:485px;top:339px">6881.14</div>
<div class="c v n" style="left:565px;top:339px">0.00</div>
<div class="c v n" style="left:645px;top:339px">0.00 %</div>
<div class="c v n" style="left:725px;top:339px">0</div>
<div class="c d" style="left:5px;top:353px">2025.11.30 ~ 2025.12.06</div>
<div class="c v y" style="left:165px;top:353px">0.01</div>
<div class="c v y" style="left:215px;top:353px">0.01 | 0.01</div>
<div class="c v y" style="left:285px;top:353px">1987.29</div>
<div class="c v y" style="left:365px;top:353px">43.09 %</div>
<div class="c v n" style="left:425px;top:353px">0.00</div>
<div class="c v n" style="left:485px;top:353px">6598.75</div>
<div class="c v g" style="left:565px;top:353px">-345.76</div>
<div class="c v g" style="left:645px;top:353px">-5.20 %</div>
<div class="c v y" style="left:725px;top:353px">10.46</div>
<div class="c d" style="left:5px;top:367px">2025.10.26 ~ 2025.11.01</div>
<div class="c v y" style="left:165px;top:367px">0.01</div>
<div class="c v y" style="left:215px;top:367px">0.01 | 0.01</div>
<div class="c v y" style="left:285px;top:367px">1993.48</div>
<div class="c v y" style="left:365px;top:367px">76.15 %</div>
<div class="c v n" style="left:425px;top:367px">0.00</div>
<div class="c v n" style="left:485px;top:367px">4611.46</div>
<div class="c v n" style="left:565px;top:367px">0.00</div>
<div class="c v n" style="left:645px;top:367px">0.00 %</div>
<div class="c v n" style="left:725px;top:367px">0</div>
<div class="c d" style="left:5px;top:381px">2025.09.28 ~ 2025.10.04</div>
<div class="c v y" style="left:165px;top:381px">0.01</div>
<div class="c v y" style="left:215px;top:381px">0.01 | 0.01</div>
<div class="c v y" style="left:285px;top:381px">705.34</div>
<div class="c v y" style="left:365px;top:381px">36.88 %</div>
<div class="c v n" style="left:425px;top:381px">0.00</div>
<div class="c v n" style="left:485px;top:381px">2617.98</div>
<div class="c v n" style="left:565px;top:381px">0.00</div>
<div class="c v n" style="left:645px;top:381px">0.00 %</div>
<div class="c v n" style="left:725px;top:381px">0</div>
<div class="c d" style="left:5px;top:395px">2025.08.31 ~ 2025.09.06</div>
<div class="c v y" style="left:165px;top:395px">0.01</div>
<div class="c v y" style="left:215px;top:395px">0.01 | 0.01</div>
<div class="c v y" style="left:285px;top:395px">912.64</div>
<div class="c v y" style="left:365px;top:395px">91.26 %</div>
<div class="c v n" style="left:425px;top:395px">0.00</div>
<div class="c v n" style="left:485px;top:395px">1912.64</div>
<div class="c v n" style="left:565px;top:395px">0.00</div>
<div class="c v n" style="left:645px;top:395px">0.00 %</div>
<div class="c v n" style="left:725px;top:395px">0</div>
<div class="c d" style="left:5px;top:409px">2025.08.10 ~ 2025.08.16</div>
<div class="c v n" style="left:165px;top:409px">0.00</div>
<div class="c v n" style="left:215px;top:409px">0.00 | 0.00</div>
<div class="c v n" style="left:285px;top:409px">0.00</div>
<div class="c v n" style="left:365px;top:409px">0.00 %</div>
<div class="c v y" style="left:425px;top:409px">1000.00</div>
<div class="c v n" style="left:485px;top:409px">1000.00</div>
<div class="c v n" style="left:565px;top:409px">0.00</div>
<div class="c v n" style="left:645px;top:409px">0.00 %</div>
<div class="c v n" style="left:725px;top:409px">0</div>
<div class="c h" style="left:5px;top:424px">合计</div>
<div class="c v y" style="left:165px;top:424px">274.55</div>
<div class="c v y" style="left:285px;top:424px">10294.31</div>
<div class="c v y" style="left:365px;top:424px">1029.43 %</div>
<div class="c v y" style="left:425px;top:424px">1000.00</div>
<div class="c v g" style="left:565px;top:424px">-345.76</div>
<div class="c v g" style="left:645px;top:424px">-5.2 %</div>
<div class="c v y" style="left:725px;top:424px">25.56</div>
</div>
<div id="tip"><div style="top:3px">FXSSI.PIVOTPOINTS#pp-line-pp-2</div><div style="top:19px">5003.53</div></div>
</div>
</body></html>
